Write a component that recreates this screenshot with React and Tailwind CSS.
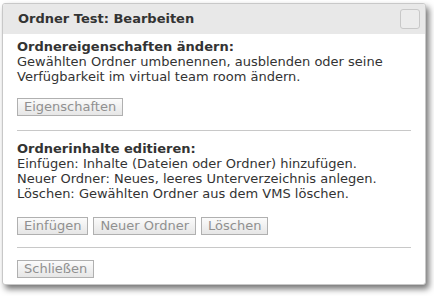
export default function App() {
  const btn =
    "h-[18px] px-[6px] border border-[#b0b0b0] bg-gradient-to-b from-[#fbfbfb] to-[#e6e6e6] text-[13px] leading-[16px] text-[#909090]";

  return (
    <div
      className="w-[434px] h-[296px] bg-white pl-[2px] pt-[3px]"
      style={{ fontFamily: '"DejaVu Sans", Verdana, sans-serif' }}
    >
      <div className="w-[424px] h-[282px] bg-white border border-[#c8c8c8] rounded-[3px] shadow-[3px_4px_6px_rgba(0,0,0,0.55)] overflow-hidden">
        {/* Kopfzeile */}
        <div className="h-[30px] bg-[#e8e8e8] flex items-center justify-between pl-[15px] pr-[5px]">
          <span className="text-[13px] font-bold text-[#333]">
            Ordner Test: Bearbeiten
          </span>
          <div className="w-[20px] h-[20px] border border-[#c8c8c8] rounded-[3px] bg-[#ececec]" />
        </div>

        <div className="px-[14px] text-[13px] leading-[15px] text-[#333]">
          {/* Eigenschaften */}
          <div className="pt-[5px] pb-[14px] border-b border-[#c8c8c8]">
            <p className="font-bold">Ordnereigenschaften ändern:</p>
            <p>
              Gewählten Ordner umbenennen, ausblenden oder seine
              <br />
              Verfügbarkeit im virtual team room ändern.
            </p>
            <div className="mt-[14px]">
              <button className={btn}>Eigenschaften</button>
            </div>
          </div>

          {/* Inhalte */}
          <div className="pt-[10px] pb-[12px] border-b border-[#c8c8c8]">
            <p className="font-bold">Ordnerinhalte editieren:</p>
            <p>Einfügen: Inhalte (Dateien oder Ordner) hinzufügen.</p>
            <p>Neuer Ordner: Neues, leeres Unterverzeichnis anlegen.</p>
            <p>Löschen: Gewählten Ordner aus dem VMS löschen.</p>
            <div className="mt-[16px] flex gap-[5px]">
              <button className={btn}>Einfügen</button>
              <button className={btn}>Neuer Ordner</button>
              <button className={btn}>Löschen</button>
            </div>
          </div>

          <div className="pt-[12px]">
            <button className={btn}>Schließen</button>
          </div>
        </div>
      </div>
    </div>
  );
}
